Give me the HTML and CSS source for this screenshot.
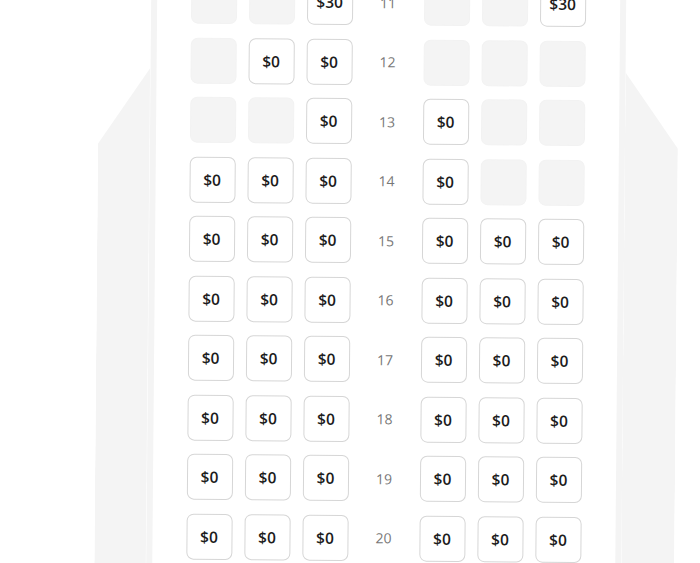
FILE: index.html
```html
<!DOCTYPE html>
<html lang="en">
<head>
<meta charset="utf-8">
<title>Seat map</title>
<link rel="stylesheet" href="styles.css">
</head>
<body>
<div class="scene">
  <div class="plane">
    <div class="wing wing-left"></div>
    <div class="cabin">
      <div class="seatmap">
        <div class="row">
          <div class="group"><div class="seat off"></div><div class="seat off"></div><div class="seat">$30</div></div>
          <div class="label">11</div>
          <div class="group"><div class="seat off"></div><div class="seat off"></div><div class="seat">$30</div></div>
        </div>
        <div class="row">
          <div class="group"><div class="seat off"></div><div class="seat">$0</div><div class="seat">$0</div></div>
          <div class="label">12</div>
          <div class="group"><div class="seat off"></div><div class="seat off"></div><div class="seat off"></div></div>
        </div>
        <div class="row">
          <div class="group"><div class="seat off"></div><div class="seat off"></div><div class="seat">$0</div></div>
          <div class="label">13</div>
          <div class="group"><div class="seat">$0</div><div class="seat off"></div><div class="seat off"></div></div>
        </div>
        <div class="row">
          <div class="group"><div class="seat">$0</div><div class="seat">$0</div><div class="seat">$0</div></div>
          <div class="label">14</div>
          <div class="group"><div class="seat">$0</div><div class="seat off"></div><div class="seat off"></div></div>
        </div>
        <div class="row">
          <div class="group"><div class="seat">$0</div><div class="seat">$0</div><div class="seat">$0</div></div>
          <div class="label">15</div>
          <div class="group"><div class="seat">$0</div><div class="seat">$0</div><div class="seat">$0</div></div>
        </div>
        <div class="row">
          <div class="group"><div class="seat">$0</div><div class="seat">$0</div><div class="seat">$0</div></div>
          <div class="label">16</div>
          <div class="group"><div class="seat">$0</div><div class="seat">$0</div><div class="seat">$0</div></div>
        </div>
        <div class="row">
          <div class="group"><div class="seat">$0</div><div class="seat">$0</div><div class="seat">$0</div></div>
          <div class="label">17</div>
          <div class="group"><div class="seat">$0</div><div class="seat">$0</div><div class="seat">$0</div></div>
        </div>
        <div class="row">
          <div class="group"><div class="seat">$0</div><div class="seat">$0</div><div class="seat">$0</div></div>
          <div class="label">18</div>
          <div class="group"><div class="seat">$0</div><div class="seat">$0</div><div class="seat">$0</div></div>
        </div>
        <div class="row">
          <div class="group"><div class="seat">$0</div><div class="seat">$0</div><div class="seat">$0</div></div>
          <div class="label">19</div>
          <div class="group"><div class="seat">$0</div><div class="seat">$0</div><div class="seat">$0</div></div>
        </div>
        <div class="row">
          <div class="group"><div class="seat">$0</div><div class="seat">$0</div><div class="seat">$0</div></div>
          <div class="label">20</div>
          <div class="group"><div class="seat">$0</div><div class="seat">$0</div><div class="seat">$0</div></div>
        </div>
      </div>
    </div>
    <div class="wing wing-right"></div>
  </div>
</div>
</body>
</html>
```

FILE: styles.css
```css
html, body {
  margin: 0;
  padding: 0;
  background: #ffffff;
}
body {
  width: 700px;
  height: 563px;
  overflow: hidden;
  font-family: "Open Sans", "Noto Sans", sans-serif;
}
.scene {
  width: 700px;
  height: 563px;
  overflow: visible;
  transform: rotate(0.5deg);
  transform-origin: 350px 281px;
}
.plane {
  display: flex;
  margin-top: -30px;
  margin-left: 97px;
  height: 600px;
}
.wing {
  background: #f4f4f4;
}
.wing-left {
  width: 51.5px;
  clip-path: polygon(100% 100px, 100% 100%, 0 100%, 0 176px);
}
.wing-right {
  width: 53px;
  clip-path: polygon(0 100px, 100% 176px, 100% 100%, 0 100%);
}
.cabin {
  width: 395px;
  border-left: 6px solid #f4f4f4;
  border-right: 6px solid #f4f4f4;
  background: #ffffff;
  padding: 9px 34.5px 0 34px;
}
.seatmap {
  display: flex;
  flex-direction: column;
  gap: 13.5px;
}
.row {
  display: flex;
  align-items: center;
  height: 46px;
}
.group {
  display: flex;
  gap: 12px;
}
.label {
  width: 71px;
  text-align: center;
  font-size: 14px;
  color: #777777;
}
.seat {
  width: 46px;
  height: 46px;
  box-sizing: border-box;
  border: 1px solid #d6d6d6;
  border-radius: 7px;
  background: #ffffff;
  display: flex;
  align-items: center;
  justify-content: center;
  font-size: 15.5px;
  font-weight: 600;
  color: #1c1c1c;
}
.seat.off {
  background: #f4f4f4;
  border-color: #f2f2f2;
}
```
